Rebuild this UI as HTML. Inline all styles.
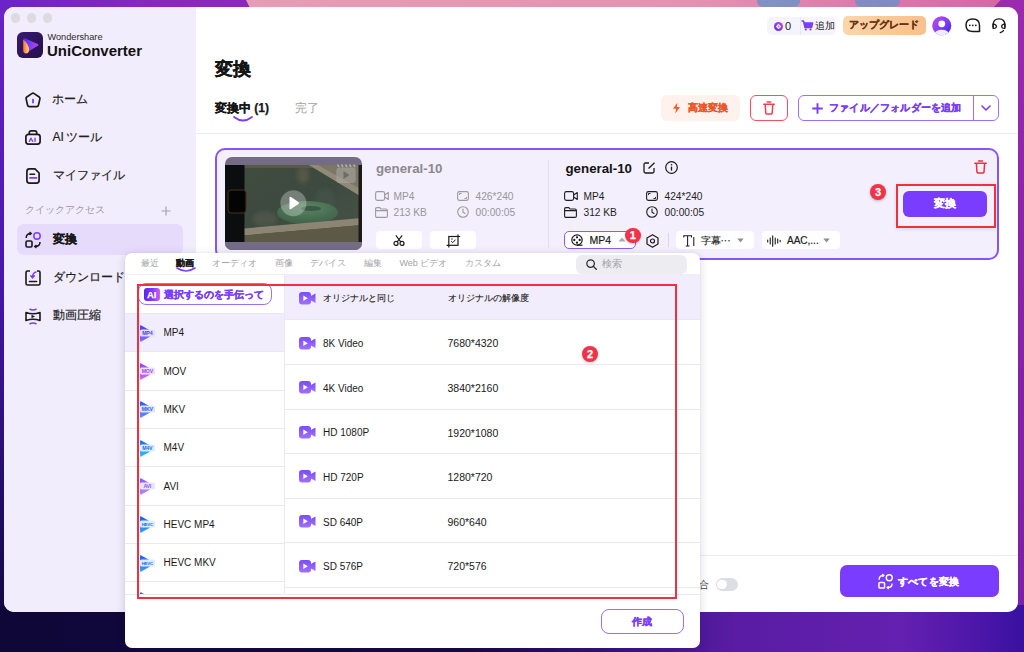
<!DOCTYPE html>
<html lang="ja">
<head>
<meta charset="utf-8">
<style>
*{box-sizing:border-box;margin:0;padding:0}
html,body{width:1024px;height:652px;overflow:hidden}
body{position:relative;font-family:"Liberation Sans",sans-serif;color:#1f1f1f;background:linear-gradient(180deg,#8a2bb5 0%,#5a1aa0 40%,#2a0d6a 80%,#140840 100%)}
.a{position:absolute}
.t{position:absolute;white-space:nowrap;line-height:1}
svg{position:absolute;overflow:visible}
</style>
</head>
<body>
<!-- desktop background -->
<div class="a" style="left:0;top:0;width:1024px;height:652px;background:linear-gradient(90deg,#5a1cb8 0%,#7a22b0 100%)"></div>
<div class="a" style="left:0;top:0;width:8px;height:652px;background:linear-gradient(180deg,#6a22c8 0%,#4a18b0 40%,#1e0c62 80%,#0f0738 100%)"></div>
<div class="a" style="left:1014px;top:0;width:10px;height:652px;background:linear-gradient(180deg,#9a2ab0 0%,#8a24a8 40%,#7a20a8 100%)"></div>
<svg style="left:0;top:0" width="1024" height="20" viewBox="0 0 1024 20"><defs><linearGradient id="tpl" x1="0" y1="0" x2="1" y2="0"><stop offset="0" stop-color="#6a24c8"/><stop offset="0.15" stop-color="#8a26c0"/><stop offset="1" stop-color="#a82ab0"/></linearGradient><linearGradient id="tpk" x1="0" y1="0" x2="1" y2="0"><stop offset="0" stop-color="#e89cb4"/><stop offset="0.6" stop-color="#e690b0"/><stop offset="1" stop-color="#d866a6"/></linearGradient></defs><rect x="0" y="0" width="1024" height="20" fill="url(#tpl)"/><polygon points="246,0 1001,0 988,13 252.5,13" fill="url(#tpk)"/><rect x="1001" y="0" width="23" height="20" fill="#9a2aae"/><polygon points="1001,0 1024,0 1024,20 988,20 988,13" fill="#9a2aae"/></svg>
<div class="a" style="left:0;top:605px;width:1024px;height:47px;background:linear-gradient(90deg,#0f0738 0%,#120840 45%,#3a1488 62%,#5a1ca4 72%,#6420b0 88%,#4a16a8 96%,#3810a0 100%)"></div>
<div class="a" style="left:757px;top:0;width:43px;height:7px;border-radius:0 0 6px 6px;background:#5a94cc;opacity:0.7"></div>
<div class="a" style="left:855px;top:0;width:45px;height:7px;border-radius:0 0 6px 6px;background:#5a94cc;opacity:0.7"></div>

<!-- window -->
<div class="a" style="left:4px;top:7px;width:1014px;height:605px;border-radius:10px;background:#fff;overflow:hidden">
  <div class="a" style="left:0;top:0;width:192px;height:605px;background:#f1edfc"></div>
</div>

<!-- traffic lights -->
<div class="a" style="left:10.5px;top:13px;width:9.5px;height:9.5px;border-radius:50%;background:#dcdbe2"></div>
<div class="a" style="left:26.5px;top:13px;width:9.5px;height:9.5px;border-radius:50%;background:#dcdbe2"></div>
<div class="a" style="left:42.5px;top:13px;width:9.5px;height:9.5px;border-radius:50%;background:#dcdbe2"></div>

<!-- logo -->
<div class="a" style="left:17px;top:32px;width:25.5px;height:26px;border-radius:6px;background:linear-gradient(135deg,#3a1a70,#22104a)"></div>
<svg style="left:17px;top:32px" width="26" height="26" viewBox="0 0 26 26">
  <defs>
    <linearGradient id="lg1" x1="0" y1="0" x2="1" y2="0.4"><stop offset="0" stop-color="#3c34ff"/><stop offset="1" stop-color="#b840f0"/></linearGradient>
    <linearGradient id="lg2" x1="0" y1="0" x2="1" y2="0"><stop offset="0" stop-color="#ff7030"/><stop offset="1" stop-color="#ffe070"/></linearGradient>
  </defs>
  <path d="M6.5 7.5 Q6.5 5.6 8.4 6.4 L20.8 12 Q22.2 12.9 20.8 13.8 L11 19.8 Z" fill="url(#lg1)"/>
  <path d="M6.2 7.4 Q11.8 12 12 17.5 Q12 21.4 9 21.4 Q6.2 21.4 6.2 18 Z" fill="url(#lg2)"/>
</svg>
<div class="t" style="left:47.5px;top:33px;font-size:9.2px;color:#2a2a2a">Wondershare</div>
<div class="t" style="left:47px;top:42.5px;font-size:15px;font-weight:bold;color:#111">UniConverter</div>

<!-- sidebar nav -->
<svg style="left:25px;top:91.5px" width="16" height="16" viewBox="0 0 16 16"><path d="M6.8 1.6 Q8 0.8 9.2 1.6 L14.2 5 Q15.2 5.7 14.9 6.9 L13.4 13.2 Q13.1 14.6 11.7 14.6 H4.3 Q2.9 14.6 2.6 13.2 L1.1 6.9 Q0.8 5.7 1.8 5 Z" fill="none" stroke="#1a1a1a" stroke-width="1.7" stroke-linejoin="round"/><path d="M8 7.6 V10.6" stroke="#7a3cff" stroke-width="1.8" stroke-linecap="round"/></svg>
<div class="t" style="left:52px;top:92.5px;font-size:12px;color:#1f1f1f;-webkit-text-stroke:0.2px #1f1f1f">ホーム</div>

<svg style="left:25px;top:130px" width="16" height="15" viewBox="0 0 16 15"><rect x="0.9" y="4.3" width="14.2" height="9.8" rx="2.5" fill="none" stroke="#1a1a1a" stroke-width="1.7"/><path d="M4.3 4.3 V2.8 Q4.3 0.9 6.2 0.9 H9.8 Q11.7 0.9 11.7 2.8 V4.3" fill="none" stroke="#1a1a1a" stroke-width="1.7"/><path d="M4.4 11.3 L6 8.2 L7.6 11.3 M10 8.2 V11.3" fill="none" stroke="#7a3cff" stroke-width="1.4" stroke-linecap="round" stroke-linejoin="round"/></svg>
<div class="t" style="left:52.5px;top:130.5px;font-size:12px;color:#1f1f1f;-webkit-text-stroke:0.2px #1f1f1f">AI<span style="margin-left:2px">ツール</span></div>

<svg style="left:26px;top:168px" width="14" height="16" viewBox="0 0 14 16"><path d="M0.9 3.5 Q0.9 0.9 3.5 0.9 H9 L13.1 5 V12.5 Q13.1 15.1 10.5 15.1 H3.5 Q0.9 15.1 0.9 12.5 Z" fill="none" stroke="#1a1a1a" stroke-width="1.7" stroke-linejoin="round"/><path d="M4 6.2 H8.5" stroke="#1a1a1a" stroke-width="1.6" stroke-linecap="round"/><path d="M4 9.9 H10.5" stroke="#7a3cff" stroke-width="1.7" stroke-linecap="round"/></svg>
<div class="t" style="left:52.5px;top:168.5px;font-size:12px;color:#1f1f1f;-webkit-text-stroke:0.2px #1f1f1f">マイファイル</div>

<div class="t" style="left:25px;top:204.6px;font-size:10px;color:#9c99a4">クイックアクセス</div>
<svg style="left:161px;top:205.5px" width="10" height="10" viewBox="0 0 10 10"><path d="M5 0.5 V9.5 M0.5 5 H9.5" stroke="#a6a3ae" stroke-width="1.2"/></svg>

<div class="a" style="left:17px;top:224px;width:166px;height:31px;border-radius:7px;background:#e6dbfb"></div>
<svg style="left:25px;top:232px" width="16" height="16" viewBox="0 0 16 16"><circle cx="12" cy="4" r="3.2" fill="none" stroke="#7a3cff" stroke-width="1.5"/><rect x="1" y="9" width="6" height="6" rx="1.2" fill="none" stroke="#1a1a1a" stroke-width="1.6"/><path d="M1.2 6 Q1.2 1.5 6 1.5 M4.5 0 L6.2 1.5 L4.5 3" fill="none" stroke="#1a1a1a" stroke-width="1.5"/><path d="M15 10 Q15 14.5 10 14.5 M11.5 13 L9.8 14.5 L11.5 16" fill="none" stroke="#1a1a1a" stroke-width="1.5"/></svg>
<div class="t" style="left:52.5px;top:232.5px;font-size:12px;font-weight:bold;color:#1a1a1a;-webkit-text-stroke-width:0.25px">変換</div>

<svg style="left:25px;top:270px" width="16" height="16" viewBox="0 0 16 16"><path d="M5 1 H2.5 Q1 1 1 2.5 V13.5 Q1 15 2.5 15 H13.5 Q15 15 15 13.5 V2.5 Q15 1 13.5 1 H12" fill="none" stroke="#1a1a1a" stroke-width="1.6"/><path d="M4.5 11.5 H11.5" stroke="#1a1a1a" stroke-width="1.6" stroke-linecap="round"/><path d="M11 2 Q7.5 3 7.5 7.5 M5.8 5.8 L7.5 7.8 L9.3 5.8" fill="none" stroke="#7a3cff" stroke-width="1.5" stroke-linecap="round"/></svg>
<div class="t" style="left:52.5px;top:271px;font-size:12px;color:#1f1f1f;-webkit-text-stroke:0.2px #1f1f1f">ダウンロード</div>

<svg style="left:25px;top:307.5px" width="16" height="17" viewBox="0 0 16 17"><path d="M1 4.5 Q8 7 15 4.5 V12.5 Q8 10 1 12.5 Z" fill="none" stroke="#1a1a1a" stroke-width="1.6" stroke-linejoin="round"/><path d="M6.5 6.8 L10 8.5 L6.5 10.2 Z" fill="#1a1a1a"/><path d="M4.5 1 Q8 3 11.5 1 M4.5 16 Q8 14 11.5 16" fill="none" stroke="#7a3cff" stroke-width="1.5"/></svg>
<div class="t" style="left:52.5px;top:309px;font-size:12px;color:#1f1f1f;-webkit-text-stroke:0.2px #1f1f1f">動画圧縮</div>


<!-- main header -->
<div class="t" style="left:215px;top:60px;font-size:18px;font-weight:bold;color:#151515;-webkit-text-stroke-width:0.35px">変換</div>
<div class="t" style="left:215px;top:102px;font-size:12px;font-weight:bold;color:#151515;-webkit-text-stroke-width:0.25px">変換中 (1)</div>
<svg style="left:232.5px;top:115.5px" width="20" height="6" viewBox="0 0 20 6"><path d="M1 1 Q10 8 19 1" fill="none" stroke="#7a3cff" stroke-width="1.8" stroke-linecap="round"/></svg>
<div class="t" style="left:295px;top:102px;font-size:12px;color:#a3a3a3">完了</div>
<div class="a" style="left:196px;top:133px;width:822px;height:1px;background:#ececf0"></div>

<!-- top right toolbar -->
<div class="a" style="left:767px;top:16.5px;width:69px;height:18px;border-radius:5px;background:#f6f4fb"></div>
<div class="a" style="left:800px;top:16.5px;width:1px;height:18px;background:#e8e6ee"></div>
<svg style="left:773.5px;top:21.5px" width="9" height="9" viewBox="0 0 9 9"><defs><linearGradient id="coin" x1="0" y1="1" x2="1" y2="0"><stop offset="0" stop-color="#4a2cff"/><stop offset="1" stop-color="#d040f0"/></linearGradient></defs><circle cx="4.5" cy="4.5" r="4.5" fill="url(#coin)"/><path d="M4.5 1.8 L7.2 4.5 L4.5 7.2 L1.8 4.5 Z" fill="#fff"/><path d="M4.5 3.2 L5.8 4.5 L4.5 5.8 L3.2 4.5 Z" fill="#b080ff"/></svg>
<div class="t" style="left:785px;top:21px;font-size:11px;color:#222">0</div>
<svg style="left:801px;top:20px" width="12" height="11" viewBox="0 0 12 11"><path d="M0.5 1 H2.5 L4 7.5 H10.5 L11.5 3 H3" fill="none" stroke="#7a3cff" stroke-width="1.6" stroke-linejoin="round"/><path d="M3.2 3 H11.3 L10.3 7 H4.1 Z" fill="#7a3cff"/><circle cx="4.8" cy="9.5" r="1.1" fill="#7a3cff"/><circle cx="9.5" cy="9.5" r="1.1" fill="#7a3cff"/></svg>
<div class="t" style="left:815px;top:21.2px;font-size:10px;color:#222">追加</div>

<div class="a" style="left:843px;top:16px;width:82.5px;height:19px;border-radius:5px;background:linear-gradient(90deg,#fcd6ad,#fbc795 60%,#f9c08e)"></div>
<div class="t" style="left:849px;top:20px;font-size:10.2px;font-weight:bold;color:#6a3612;-webkit-text-stroke-width:0.25px">アップグレード</div>

<svg style="left:932px;top:16px" width="19.5" height="19.5" viewBox="0 0 20 20"><defs><linearGradient id="av" x1="0.1" y1="0.1" x2="0.9" y2="0.8"><stop offset="0" stop-color="#b848f0"/><stop offset="0.5" stop-color="#8a40f8"/><stop offset="1" stop-color="#4a2cff"/></linearGradient><clipPath id="avc"><circle cx="10" cy="10" r="9.8"/></clipPath></defs><circle cx="10" cy="10" r="9.8" fill="url(#av)"/><g clip-path="url(#avc)"><circle cx="10" cy="8" r="3.5" fill="#fff"/><ellipse cx="10" cy="19" rx="7.5" ry="5" fill="#f0ecfc"/></g></svg>

<svg style="left:965.3px;top:17.8px" width="16" height="15" viewBox="0 0 16 15"><path d="M14.5 13.5 H8 Q1 13.5 1 7.2 Q1 1 7.8 1 Q14.5 1 14.5 7.5 Z" fill="none" stroke="#1a1a1a" stroke-width="1.5" stroke-linejoin="round"/><circle cx="4.8" cy="7.3" r="0.9" fill="#1a1a1a"/><circle cx="7.8" cy="7.3" r="0.9" fill="#1a1a1a"/><circle cx="10.8" cy="7.3" r="0.9" fill="#1a1a1a"/></svg>
<svg style="left:992px;top:18px" width="14" height="16" viewBox="0 0 14 16"><path d="M1.1 9.5 V7 Q1.1 0.9 7 0.9 Q12.9 0.9 12.9 7 V9.5" fill="none" stroke="#1a1a1a" stroke-width="1.4"/><path d="M1.1 5.9 Q4.4 6.6 4.4 8.3 Q4.4 10.6 1.1 10.3 Z" fill="none" stroke="#1a1a1a" stroke-width="1.3" stroke-linejoin="round"/><path d="M12.9 5.9 Q9.6 6.6 9.6 8.3 Q9.6 10.6 12.9 10.3 Z" fill="none" stroke="#1a1a1a" stroke-width="1.3" stroke-linejoin="round"/><path d="M8.3 14.6 Q10.5 14 11.5 12.6" fill="none" stroke="#1a1a1a" stroke-width="1.4" stroke-linecap="round"/></svg>

<!-- buttons row -->
<div class="a" style="left:660.5px;top:95px;width:79px;height:25.5px;border-radius:6px;background:#fff1ec"></div>
<svg style="left:671.5px;top:101.5px" width="9" height="12" viewBox="0 0 9 12"><path d="M5.5 0.5 L1 6.8 H4.2 L3.2 11.5 L8 5 H4.8 Z" fill="#f25a2a"/></svg>
<div class="t" style="left:688px;top:103px;font-size:10px;font-weight:bold;color:#f05526;-webkit-text-stroke-width:0.25px">高速変換</div>

<div class="a" style="left:750px;top:95px;width:38px;height:25.5px;border-radius:6px;border:1px solid #f2505e;background:#fff"></div>
<svg style="left:763px;top:100.5px" width="12" height="14" viewBox="0 0 12 14"><path d="M0.8 3.2 H11.2 M4.2 1 H7.8" stroke="#f0404e" stroke-width="1.5" stroke-linecap="round"/><path d="M2.2 3.5 L2.8 12.2 Q2.9 13 3.7 13 H8.3 Q9.1 13 9.2 12.2 L9.8 3.5" fill="none" stroke="#f0404e" stroke-width="1.5" stroke-linejoin="round"/></svg>

<div class="a" style="left:797.5px;top:95px;width:201px;height:25.5px;border-radius:6px;border:1px solid #9a70ff;background:#fff"></div>
<div class="a" style="left:972.5px;top:95px;width:1px;height:25.5px;background:#9a70ff"></div>
<svg style="left:811.5px;top:102.5px" width="11" height="11" viewBox="0 0 11 11"><path d="M5.5 0.3 V10.7 M0.3 5.5 H10.7" stroke="#7a3cff" stroke-width="1.9"/></svg>
<div class="t" style="left:829px;top:103px;font-size:10px;font-weight:bold;color:#7a3cff;letter-spacing:0.2px;-webkit-text-stroke-width:0.25px">ファイル／フォルダーを追加</div>
<svg style="left:981px;top:105px" width="10" height="6" viewBox="0 0 10 6"><path d="M1 1 L5 5 L9 1" fill="none" stroke="#7a3cff" stroke-width="1.6" stroke-linecap="round" stroke-linejoin="round"/></svg>


<!-- file card -->
<div class="a" style="left:215px;top:148px;width:784px;height:111.5px;border-radius:10px;border:2px solid #8455ff;background:#f3effc"></div>
<!-- thumbnail -->
<svg style="left:225px;top:157px" width="137" height="93" viewBox="0 0 137 93">
<defs>
<clipPath id="thc"><rect x="0" y="0" width="137" height="93" rx="7"/></clipPath>
<linearGradient id="wat" x1="0" y1="0" x2="1" y2="1"><stop offset="0" stop-color="#424c40"/><stop offset="0.5" stop-color="#3d4a40"/><stop offset="1" stop-color="#4a5448"/></linearGradient>
<radialGradient id="tube" cx="0.5" cy="0.3" r="0.65"><stop offset="0" stop-color="#5a8462"/><stop offset="1" stop-color="#40644a"/></radialGradient>
<filter id="bl"><feGaussianBlur stdDeviation="2"/></filter>
</defs>
<g clip-path="url(#thc)">
<rect x="0" y="0" width="137" height="93" fill="#736c84"/>
<rect x="0" y="8" width="137" height="77" fill="url(#wat)"/>
<g filter="url(#bl)" opacity="0.55">
<ellipse cx="78" cy="18" rx="6" ry="9" fill="#6a6450"/>
<ellipse cx="40" cy="62" rx="12" ry="8" fill="#5a5e50"/>
<ellipse cx="100" cy="45" rx="10" ry="14" fill="#48564c"/>
</g>
<rect x="19" y="8" width="118" height="3" fill="#5a5848"/>
<polygon points="84,8 137,8 137,40" fill="#7c7666"/>
<polygon points="84,8 93,8 137,33 137,40" fill="#928a78"/>
<ellipse cx="82.5" cy="55.5" rx="30.5" ry="11.5" fill="url(#tube)"/>
<ellipse cx="86" cy="51.5" rx="10" ry="2.5" fill="#34503e" opacity="0.8"/>
<polygon points="19,71.5 137,61 137,68 19,78.5" fill="#8d8574"/>
<polygon points="19,78.5 137,68 137,85 19,85" fill="#5c5a46"/>
<rect x="0" y="8" width="19.5" height="77" fill="#0a0e0e"/>
<rect x="133.5" y="8" width="3.5" height="77" fill="#1a1a16"/>
<rect x="3" y="33" width="18" height="23" rx="3" fill="#040404" stroke="#4a3018" stroke-width="1"/>
<rect x="0" y="85" width="137" height="8" fill="#736c84"/>
</g>
<circle cx="68.4" cy="46.3" r="13" fill="rgba(235,240,235,0.32)"/>
<path d="M64.5 41 Q64.5 39.3 66 40.1 L73.5 44.9 Q74.8 46 73.5 47.1 L66 51.9 Q64.5 52.8 64.5 51 Z" fill="#fff"/>
<rect x="111.3" y="10.5" width="19.3" height="15.5" rx="3" fill="rgba(170,170,165,0.55)"/>
<path d="M112.5 7.5 L114 10 M116.5 7.5 L118 10 M120.5 7.5 L122 10 M124.5 7.5 L126 10 M128.5 7.5 L130 10" stroke="rgba(200,200,195,0.7)" stroke-width="1.5"/>
<path d="M118.5 14 L124.5 18 L118.5 22 Z" fill="rgba(100,95,90,0.75)"/>
</svg>
<div class="t" style="left:376px;top:161.5px;font-size:13.3px;font-weight:bold;color:#8a8a8e">general-10</div>
<svg style="left:374.5px;top:191px" width="14" height="10" viewBox="0 0 14 10"><rect x="0.6" y="0.6" width="9" height="8.8" rx="1.8" fill="none" stroke="#9a9aa0" stroke-width="1.1"/><path d="M9.6 4 L13.3 1.5 V8.5 L9.6 6" fill="none" stroke="#9a9aa0" stroke-width="1.1" stroke-linejoin="round"/></svg>
<div class="t" style="left:393.5px;top:192px;font-size:10.2px;color:#96969c">MP4</div>
<svg style="left:374.5px;top:206.5px" width="13" height="11" viewBox="0 0 13 11"><path d="M0.6 2 Q0.6 0.6 2 0.6 H4.8 L6 2 H11 Q12.4 2 12.4 3.4 V9 Q12.4 10.4 11 10.4 H2 Q0.6 10.4 0.6 9 Z M0.6 3.6 H12.4" fill="none" stroke="#9a9aa0" stroke-width="1.1"/></svg>
<div class="t" style="left:393.5px;top:207.8px;font-size:10.2px;color:#96969c">213 KB</div>
<svg style="left:457px;top:190.5px" width="12" height="10" viewBox="0 0 12 10"><rect x="0.6" y="0.6" width="10.8" height="8.8" rx="1.8" fill="none" stroke="#9a9aa0" stroke-width="1.1"/><path d="M2.5 4 V2.5 H4.5 M9.5 6 V7.5 H7.5" fill="none" stroke="#9a9aa0" stroke-width="1"/></svg>
<div class="t" style="left:475.5px;top:192px;font-size:10.2px;color:#96969c">426*240</div>
<svg style="left:456.5px;top:205.5px" width="12" height="12" viewBox="0 0 12 12"><circle cx="6" cy="6" r="5.3" fill="none" stroke="#9a9aa0" stroke-width="1.1"/><path d="M6 3 V6.2 L8 7.5" fill="none" stroke="#9a9aa0" stroke-width="1.1" stroke-linecap="round"/></svg>
<div class="t" style="left:475.5px;top:207.8px;font-size:10.2px;color:#96969c">00:00:05</div>

<div class="a" style="left:375.5px;top:231px;width:46px;height:18px;border-radius:4px;background:#fff"></div>
<svg style="left:392.5px;top:235px" width="12" height="11" viewBox="0 0 12 11"><path d="M2.8 0.3 L8 7.2 M9.2 0.3 L4 7.2" stroke="#1a1a1a" stroke-width="1.1"/><circle cx="3" cy="8.4" r="2" fill="none" stroke="#1a1a1a" stroke-width="1.2"/><circle cx="9" cy="8.4" r="2" fill="none" stroke="#1a1a1a" stroke-width="1.2"/></svg>
<div class="a" style="left:430px;top:231px;width:46px;height:18px;border-radius:4px;background:#fff"></div>
<svg style="left:445.8px;top:234px" width="15" height="14" viewBox="0 0 15 14"><rect x="2.8" y="2.5" width="9.2" height="8.8" fill="none" stroke="#1a1a1a" stroke-width="1.2"/><path d="M12 2.5 H14.2 M12 2.5 V0.4 M2.8 11.3 H0.6 M2.8 11.3 V13.5" fill="none" stroke="#1a1a1a" stroke-width="1.2"/><path d="M5.2 7.2 L6.8 8.6 L9.6 5.6" fill="none" stroke="#1a1a1a" stroke-width="1"/><circle cx="6" cy="5" r="0.7" fill="#1a1a1a"/></svg>

<div class="a" style="left:547.5px;top:160px;width:1px;height:88px;background:#e2def0"></div>

<div class="t" style="left:565.5px;top:161.5px;font-size:13.3px;font-weight:bold;color:#141414">general-10</div>
<svg style="left:642.5px;top:161.5px" width="13" height="12" viewBox="0 0 13 12"><path d="M6 1 H2.5 Q1 1 1 2.5 V9.5 Q1 11 2.5 11 H9.5 Q11 11 11 9.5 V6" fill="none" stroke="#1a1a1a" stroke-width="1.3"/><path d="M5.5 6.5 L11.5 0.7" stroke="#1a1a1a" stroke-width="1.3"/></svg>
<svg style="left:664.5px;top:160.5px" width="13" height="13" viewBox="0 0 13 13"><circle cx="6.5" cy="6.5" r="5.8" fill="none" stroke="#1a1a1a" stroke-width="1.2"/><circle cx="6.5" cy="3.8" r="0.8" fill="#1a1a1a"/><path d="M6.5 5.6 V9.6" stroke="#1a1a1a" stroke-width="1.3"/></svg>

<svg style="left:564px;top:191px" width="14" height="10" viewBox="0 0 14 10"><rect x="0.6" y="0.6" width="9" height="8.8" rx="1.8" fill="none" stroke="#1f1f1f" stroke-width="1.1"/><path d="M9.6 4 L13.3 1.5 V8.5 L9.6 6" fill="none" stroke="#1f1f1f" stroke-width="1.1" stroke-linejoin="round"/></svg>
<div class="t" style="left:583.5px;top:192px;font-size:10.2px;color:#1f1f1f">MP4</div>
<svg style="left:564px;top:206.5px" width="13" height="11" viewBox="0 0 13 11"><path d="M0.6 2 Q0.6 0.6 2 0.6 H4.8 L6 2 H11 Q12.4 2 12.4 3.4 V9 Q12.4 10.4 11 10.4 H2 Q0.6 10.4 0.6 9 Z M0.6 3.6 H12.4" fill="none" stroke="#1f1f1f" stroke-width="1.1"/></svg>
<div class="t" style="left:583.5px;top:207.8px;font-size:10.2px;color:#1f1f1f">312 KB</div>
<svg style="left:646px;top:190.5px" width="12" height="10" viewBox="0 0 12 10"><rect x="0.6" y="0.6" width="10.8" height="8.8" rx="1.8" fill="none" stroke="#1f1f1f" stroke-width="1.1"/><path d="M2.5 4 V2.5 H4.5 M9.5 6 V7.5 H7.5" fill="none" stroke="#1f1f1f" stroke-width="1"/></svg>
<div class="t" style="left:664.5px;top:192px;font-size:10.2px;color:#1f1f1f">424*240</div>
<svg style="left:645.5px;top:205.5px" width="12" height="12" viewBox="0 0 12 12"><circle cx="6" cy="6" r="5.3" fill="none" stroke="#1f1f1f" stroke-width="1.1"/><path d="M6 3 V6.2 L8 7.5" fill="none" stroke="#1f1f1f" stroke-width="1.1" stroke-linecap="round"/></svg>
<div class="t" style="left:664.5px;top:207.8px;font-size:10.2px;color:#1f1f1f">00:00:05</div>

<div class="a" style="left:564px;top:230.5px;width:71.5px;height:18.5px;border-radius:5px;border:1.4px solid #8a5cff;background:#fff"></div>
<svg style="left:570.5px;top:234px" width="12" height="12" viewBox="0 0 12 12"><circle cx="6" cy="6" r="5.2" fill="none" stroke="#1a1a1a" stroke-width="1.2"/><circle cx="6" cy="3.3" r="1.15" fill="#1a1a1a"/><circle cx="6" cy="8.7" r="1.15" fill="#1a1a1a"/><circle cx="3.3" cy="6" r="1.15" fill="#1a1a1a"/><circle cx="8.7" cy="6" r="1.15" fill="#1a1a1a"/><path d="M6 11.2 H11.5" stroke="#1a1a1a" stroke-width="1.2"/></svg>
<div class="t" style="left:589.5px;top:235px;font-size:10.5px;color:#1a1a1a;-webkit-text-stroke-width:0.2px">MP4</div>
<svg style="left:617.5px;top:237px" width="8" height="5" viewBox="0 0 8 5"><path d="M0.5 4.5 L4 0.5 L7.5 4.5 Z" fill="#a8a8ae"/></svg>
<div class="a" style="left:625px;top:227.5px;width:15.5px;height:15.5px;border-radius:50%;background:#f03348;box-shadow:0 1px 2px rgba(0,0,0,0.2)"></div>
<div class="t" style="left:625px;top:230px;width:15.5px;text-align:center;font-size:11px;font-weight:bold;color:#fff;-webkit-text-stroke-width:0.25px">1</div>
<svg style="left:645.5px;top:233.5px" width="13" height="14" viewBox="0 0 13 14"><path d="M6.5 0.8 L12 3.9 V10.1 L6.5 13.2 L1 10.1 V3.9 Z" fill="none" stroke="#1a1a1a" stroke-width="1.2" stroke-linejoin="round"/><circle cx="6.5" cy="7" r="2" fill="none" stroke="#1a1a1a" stroke-width="1.2"/></svg>
<div class="a" style="left:668px;top:233px;width:1px;height:14px;background:#dcd8e8"></div>

<div class="a" style="left:676px;top:231px;width:78px;height:18px;border-radius:4px;background:#fff"></div>
<svg style="left:683px;top:234.5px" width="12" height="12" viewBox="0 0 12 12"><path d="M0.8 2.5 V0.8 H8.5 V2.5 M4.6 0.8 V11 M2.8 11 H6.5 M10.8 2 V11" fill="none" stroke="#1a1a1a" stroke-width="1.05"/></svg>
<div class="t" style="left:700.5px;top:235.8px;font-size:10px;color:#1a1a1a;-webkit-text-stroke-width:0.15px">字幕···</div>
<svg style="left:737px;top:238px" width="7" height="5" viewBox="0 0 7 5"><path d="M0.3 0.5 H6.7 L3.5 4.5 Z" fill="#8e8e94"/></svg>

<div class="a" style="left:761.5px;top:231px;width:78.5px;height:18px;border-radius:4px;background:#fff"></div>
<svg style="left:766.5px;top:234.5px" width="15" height="12" viewBox="0 0 15 12"><path d="M0.7 5 V7 M3.2 3 V9 M5.7 0.7 V11.3 M8.2 3 V9 M10.7 4 V8 M13.2 5.3 V6.7" stroke="#1a1a1a" stroke-width="1.1" stroke-linecap="round"/></svg>
<div class="t" style="left:787px;top:235.5px;font-size:10px;color:#1a1a1a;-webkit-text-stroke-width:0.2px">AAC,...</div>
<svg style="left:823px;top:238px" width="7" height="5" viewBox="0 0 7 5"><path d="M0.3 0.5 H6.7 L3.5 4.5 Z" fill="#8e8e94"/></svg>

<svg style="left:973.5px;top:159.5px" width="13" height="14" viewBox="0 0 13 14"><path d="M0.8 3.2 H12.2 M4.5 1 H8.5" stroke="#f0303e" stroke-width="1.5" stroke-linecap="round"/><path d="M2.4 3.5 L3 12.2 Q3.1 13 3.9 13 H9.1 Q9.9 13 10 12.2 L10.6 3.5" fill="none" stroke="#f0303e" stroke-width="1.5" stroke-linejoin="round"/></svg>

<div class="a" style="left:870px;top:184px;width:16px;height:16px;border-radius:50%;background:#f03348;box-shadow:0 1px 3px rgba(0,0,0,0.25)"></div>
<div class="t" style="left:870px;top:186.5px;width:16px;text-align:center;font-size:11px;font-weight:bold;color:#fff;-webkit-text-stroke-width:0.25px">3</div>
<div class="a" style="left:896px;top:183.5px;width:99.5px;height:44px;border:2px solid #f0303e;box-shadow:0 1px 4px rgba(0,0,0,0.12)"></div>
<div class="a" style="left:903px;top:191px;width:83.5px;height:25.5px;border-radius:6px;background:#7a3cff"></div>
<div class="t" style="left:903px;top:198px;width:83.5px;text-align:center;font-size:11px;font-weight:bold;color:#fff;-webkit-text-stroke-width:0.25px">変換</div>

<!-- bottom bar -->
<div class="a" style="left:196px;top:555px;width:822px;height:1px;background:#ececf0"></div>
<div class="t" style="left:699px;top:579.5px;font-size:10px;color:#444">合</div>
<div class="a" style="left:715.5px;top:578px;width:22.5px;height:12.5px;border-radius:7px;background:#dddde5"></div>
<div class="a" style="left:717px;top:579.5px;width:9.5px;height:9.5px;border-radius:50%;background:#fff"></div>
<div class="a" style="left:839.5px;top:565px;width:159px;height:31.5px;border-radius:7px;background:#7a3cff"></div>
<svg style="left:877.5px;top:573.5px" width="15" height="15" viewBox="0 0 16 16"><circle cx="12" cy="4" r="3.2" fill="none" stroke="#fff" stroke-width="1.5"/><rect x="1" y="9" width="6" height="6" rx="1.2" fill="none" stroke="#fff" stroke-width="1.6"/><path d="M1.2 6 Q1.2 1.5 6 1.5 M4.5 0 L6.2 1.5 L4.5 3" fill="none" stroke="#fff" stroke-width="1.5"/><path d="M15 10 Q15 14.5 10 14.5 M11.5 13 L9.8 14.5 L11.5 16" fill="none" stroke="#fff" stroke-width="1.5"/></svg>
<div class="t" style="left:898px;top:576.5px;font-size:10px;letter-spacing:0.2px;font-weight:bold;color:#fff;-webkit-text-stroke-width:0.25px">すべてを変換</div>


<!-- popup -->
<div class="a" style="left:125px;top:253px;width:574.5px;height:395px;border-radius:7px;background:#fff;box-shadow:0 2px 10px rgba(40,20,80,0.18),0 0 1px rgba(0,0,0,0.15);overflow:hidden">
  <div class="a" style="left:159.5px;top:21px;width:415px;height:45.5px;background:#f1edfc"></div>
  <div class="a" style="left:0;top:60px;width:159.5px;height:38.5px;background:#f1edfc"></div>
  <div class="a" style="left:159px;top:21px;width:1px;height:320px;background:#ebe8f2"></div>
  <div class="a" style="left:0;top:21px;width:574.5px;height:1px;background:#f0eef4"></div>
  <div class="a" style="left:0;top:60.0px;width:159px;height:1px;background:#ebe8f2"></div>
  <div class="a" style="left:0;top:98.3px;width:159px;height:1px;background:#ebe8f2"></div>
  <div class="a" style="left:0;top:136.6px;width:159px;height:1px;background:#ebe8f2"></div>
  <div class="a" style="left:0;top:174.9px;width:159px;height:1px;background:#ebe8f2"></div>
  <div class="a" style="left:0;top:213.2px;width:159px;height:1px;background:#ebe8f2"></div>
  <div class="a" style="left:0;top:251.5px;width:159px;height:1px;background:#ebe8f2"></div>
  <div class="a" style="left:0;top:289.8px;width:159px;height:1px;background:#ebe8f2"></div>
  <div class="a" style="left:0;top:328.1px;width:159px;height:1px;background:#ebe8f2"></div>
  <div class="a" style="left:0;top:341px;width:159px;height:1px;background:#ebe8f2"></div>
  <div class="a" style="left:160px;top:66.3px;width:414.5px;height:1px;background:#ebe8f2"></div>
  <div class="a" style="left:160px;top:110.9px;width:414.5px;height:1px;background:#ebe8f2"></div>
  <div class="a" style="left:160px;top:155.5px;width:414.5px;height:1px;background:#ebe8f2"></div>
  <div class="a" style="left:160px;top:200.1px;width:414.5px;height:1px;background:#ebe8f2"></div>
  <div class="a" style="left:160px;top:244.7px;width:414.5px;height:1px;background:#ebe8f2"></div>
  <div class="a" style="left:160px;top:289.3px;width:414.5px;height:1px;background:#ebe8f2"></div>
  <div class="a" style="left:160px;top:333.9px;width:414.5px;height:1px;background:#ebe8f2"></div>
  <div class="a" style="left:160px;top:341px;width:414.5px;height:1px;background:#ebe8f2"></div>
</div>
<div class="t" style="left:140.5px;top:258.5px;font-size:9px;color:#a3a3a8">最近</div>
<div class="t" style="left:176.3px;top:258.5px;font-size:9px;font-weight:bold;color:#1a1a1a;-webkit-text-stroke-width:0.25px">動画</div>
<div class="t" style="left:212.3px;top:258.5px;font-size:9px;color:#a3a3a8">オーディオ</div>
<div class="t" style="left:274.7px;top:258.5px;font-size:9px;color:#a3a3a8">画像</div>
<div class="t" style="left:310.4px;top:258.5px;font-size:9px;color:#a3a3a8">デバイス</div>
<div class="t" style="left:363.8px;top:258.5px;font-size:9px;color:#a3a3a8">編集</div>
<div class="t" style="left:399.5px;top:258.5px;font-size:9px;color:#a3a3a8">Web<span style="margin-left:2.5px">ビデオ</span></div>
<div class="t" style="left:465.2px;top:258.5px;font-size:9px;color:#a3a3a8">カスタム</div>
<svg style="left:175.5px;top:266.5px" width="20" height="5" viewBox="0 0 20 5"><path d="M1 1 Q10 7 19 1" fill="none" stroke="#7a3cff" stroke-width="1.6" stroke-linecap="round"/></svg>
<div class="a" style="left:575.5px;top:255px;width:111px;height:18.5px;border-radius:6px;background:#ececf1"></div>
<svg style="left:585.5px;top:258.5px" width="11" height="11" viewBox="0 0 11 11"><circle cx="4.6" cy="4.6" r="3.8" fill="none" stroke="#2a2a2a" stroke-width="1.2"/><path d="M7.4 7.4 L10.3 10.3" stroke="#2a2a2a" stroke-width="1.3" stroke-linecap="round"/></svg>
<div class="t" style="left:602px;top:259px;font-size:10px;color:#a0a0a6">検索</div>
<div class="a" style="left:138px;top:282.8px;width:133.8px;height:22.7px;border-radius:8px;border:1px solid #9a70ff;background:#fff"></div>
<div class="a" style="left:144px;top:288.3px;width:15.5px;height:12.5px;border-radius:3px;background:linear-gradient(90deg,#5a24f5,#8a3cff 60%,#d060f0)"></div>
<div class="t" style="left:144px;top:290.2px;width:15.5px;text-align:center;font-size:9.5px;font-weight:bold;color:#fff;-webkit-text-stroke-width:0.25px">AI</div>
<div class="t" style="left:163.5px;top:289.5px;font-size:10px;font-weight:bold;color:#7a3cff;-webkit-text-stroke-width:0.25px">選択するのを手伝って</div>
<svg style="left:139px;top:324.8px" width="17" height="17" viewBox="0 0 17 17"><defs><linearGradient id="fg1" x1="0" y1="0" x2="0" y2="1"><stop offset="0" stop-color="#4a3cff"/><stop offset="1" stop-color="#8a6aff"/></linearGradient></defs><path d="M1 1.2 Q1 -0.2 2.3 0.5 L10.8 5.2 V11.8 L2.3 16.5 Q1 17.2 1 15.8 Z" fill="url(#fg1)"/><rect x="1" y="4.6" width="15" height="6.8" rx="1.5" fill="#e4defc"/><text x="8.3" y="10" font-size="5.2" font-weight="bold" fill="#4a3cff" text-anchor="middle" font-family="Liberation Sans" letter-spacing="-0.2">MP4</text></svg><div class="t" style="left:163.5px;top:328.3px;font-size:10px;color:#1a1a1a">MP4</div>
<svg style="left:139px;top:363.1px" width="17" height="17" viewBox="0 0 17 17"><defs><linearGradient id="fg2" x1="0" y1="0" x2="0" y2="1"><stop offset="0" stop-color="#a040f0"/><stop offset="1" stop-color="#c070f5"/></linearGradient></defs><path d="M1 1.2 Q1 -0.2 2.3 0.5 L10.8 5.2 V11.8 L2.3 16.5 Q1 17.2 1 15.8 Z" fill="url(#fg2)"/><rect x="1" y="4.6" width="15" height="6.8" rx="1.5" fill="#f1e0fd"/><text x="8.3" y="10" font-size="5.2" font-weight="bold" fill="#a040f0" text-anchor="middle" font-family="Liberation Sans" letter-spacing="-0.2">MOV</text></svg><div class="t" style="left:163.5px;top:366.6px;font-size:10px;color:#1a1a1a">MOV</div>
<svg style="left:139px;top:401.4px" width="17" height="17" viewBox="0 0 17 17"><defs><linearGradient id="fg3" x1="0" y1="0" x2="0" y2="1"><stop offset="0" stop-color="#2a5aff"/><stop offset="1" stop-color="#6a8aff"/></linearGradient></defs><path d="M1 1.2 Q1 -0.2 2.3 0.5 L10.8 5.2 V11.8 L2.3 16.5 Q1 17.2 1 15.8 Z" fill="url(#fg3)"/><rect x="1" y="4.6" width="15" height="6.8" rx="1.5" fill="#dde6ff"/><text x="8.3" y="10" font-size="5.2" font-weight="bold" fill="#2a5aff" text-anchor="middle" font-family="Liberation Sans" letter-spacing="-0.2">MKV</text></svg><div class="t" style="left:163.5px;top:404.9px;font-size:10px;color:#1a1a1a">MKV</div>
<svg style="left:139px;top:439.7px" width="17" height="17" viewBox="0 0 17 17"><defs><linearGradient id="fg4" x1="0" y1="0" x2="0" y2="1"><stop offset="0" stop-color="#1a6aff"/><stop offset="1" stop-color="#30c0f5"/></linearGradient></defs><path d="M1 1.2 Q1 -0.2 2.3 0.5 L10.8 5.2 V11.8 L2.3 16.5 Q1 17.2 1 15.8 Z" fill="url(#fg4)"/><rect x="1" y="4.6" width="15" height="6.8" rx="1.5" fill="#d6f0ff"/><text x="8.3" y="10" font-size="5.2" font-weight="bold" fill="#1a6aff" text-anchor="middle" font-family="Liberation Sans" letter-spacing="-0.2">M4V</text></svg><div class="t" style="left:163.5px;top:443.2px;font-size:10px;color:#1a1a1a">M4V</div>
<svg style="left:139px;top:478.0px" width="17" height="17" viewBox="0 0 17 17"><defs><linearGradient id="fg5" x1="0" y1="0" x2="0" y2="1"><stop offset="0" stop-color="#8a5af0"/><stop offset="1" stop-color="#b08af5"/></linearGradient></defs><path d="M1 1.2 Q1 -0.2 2.3 0.5 L10.8 5.2 V11.8 L2.3 16.5 Q1 17.2 1 15.8 Z" fill="url(#fg5)"/><rect x="1" y="4.6" width="15" height="6.8" rx="1.5" fill="#ebe4fd"/><text x="8.3" y="10" font-size="5.2" font-weight="bold" fill="#8a5af0" text-anchor="middle" font-family="Liberation Sans" letter-spacing="-0.2">AVI</text></svg><div class="t" style="left:163.5px;top:481.5px;font-size:10px;color:#1a1a1a">AVI</div>
<svg style="left:139px;top:516.3px" width="17" height="17" viewBox="0 0 17 17"><defs><linearGradient id="fg6" x1="0" y1="0" x2="0" y2="1"><stop offset="0" stop-color="#1a60ff"/><stop offset="1" stop-color="#3aa0f5"/></linearGradient></defs><path d="M1 1.2 Q1 -0.2 2.3 0.5 L10.8 5.2 V11.8 L2.3 16.5 Q1 17.2 1 15.8 Z" fill="url(#fg6)"/><rect x="1" y="4.6" width="15" height="6.8" rx="1.5" fill="#dcecff"/><text x="8.3" y="10" font-size="4.3" font-weight="bold" fill="#1a60ff" text-anchor="middle" font-family="Liberation Sans" letter-spacing="-0.2">HEVC</text></svg><div class="t" style="left:163.5px;top:519.8px;font-size:10px;color:#1a1a1a">HEVC MP4</div>
<svg style="left:139px;top:554.6px" width="17" height="17" viewBox="0 0 17 17"><defs><linearGradient id="fg7" x1="0" y1="0" x2="0" y2="1"><stop offset="0" stop-color="#1a60ff"/><stop offset="1" stop-color="#3aa0f5"/></linearGradient></defs><path d="M1 1.2 Q1 -0.2 2.3 0.5 L10.8 5.2 V11.8 L2.3 16.5 Q1 17.2 1 15.8 Z" fill="url(#fg7)"/><rect x="1" y="4.6" width="15" height="6.8" rx="1.5" fill="#dcecff"/><text x="8.3" y="10" font-size="4.3" font-weight="bold" fill="#1a60ff" text-anchor="middle" font-family="Liberation Sans" letter-spacing="-0.2">HEVC</text></svg><div class="t" style="left:163.5px;top:558.1px;font-size:10px;color:#1a1a1a">HEVC MKV</div>
<div class="a" style="left:139px;top:585px;width:17px;height:9px;overflow:hidden"><svg style="left:0;top:7.1px" width="17" height="17" viewBox="0 0 17 17"><defs><linearGradient id="fg8" x1="0" y1="0" x2="0" y2="1"><stop offset="0" stop-color="#1a60ff"/><stop offset="1" stop-color="#3aa0f5"/></linearGradient></defs><path d="M1 1.2 Q1 -0.2 2.3 0.5 L10.8 5.2 V11.8 L2.3 16.5 Q1 17.2 1 15.8 Z" fill="url(#fg8)"/><rect x="1" y="4.6" width="15" height="6.8" rx="1.5" fill="#dcecff"/><text x="8.3" y="10" font-size="4.3" font-weight="bold" fill="#1a60ff" text-anchor="middle" font-family="Liberation Sans" letter-spacing="-0.2">HEVC</text></svg></div><svg style="left:298.5px;top:292.0px" width="17" height="13" viewBox="0 0 17 13"><defs><linearGradient id="vg0" x1="0" y1="0" x2="0" y2="1"><stop offset="0" stop-color="#7a4cff"/><stop offset="1" stop-color="#a070ff"/></linearGradient></defs><rect x="0" y="0" width="12" height="12.5" rx="3" fill="url(#vg0)"/><path d="M11 4.5 L16.5 1.5 V11 L11 8 Z" fill="url(#vg0)"/><path d="M4.3 3.5 L8.8 6.25 L4.3 9 Z" fill="#fff"/></svg>
<div class="t" style="left:323px;top:293.7px;font-size:9px;color:#1a1a1a;-webkit-text-stroke:0.12px #1a1a1a">オリジナルと同じ</div>
<div class="t" style="left:447.5px;top:293.7px;font-size:9px;color:#1a1a1a;-webkit-text-stroke:0.12px #1a1a1a">オリジナルの解像度</div>
<svg style="left:298.5px;top:336.6px" width="17" height="13" viewBox="0 0 17 13"><defs><linearGradient id="vg1" x1="0" y1="0" x2="0" y2="1"><stop offset="0" stop-color="#7a4cff"/><stop offset="1" stop-color="#a070ff"/></linearGradient></defs><rect x="0" y="0" width="12" height="12.5" rx="3" fill="url(#vg1)"/><path d="M11 4.5 L16.5 1.5 V11 L11 8 Z" fill="url(#vg1)"/><path d="M4.3 3.5 L8.8 6.25 L4.3 9 Z" fill="#fff"/></svg>
<div class="t" style="left:323px;top:339.1px;font-size:10px;color:#1a1a1a">8K Video</div>
<div class="t" style="left:447.5px;top:338.3px;font-size:10.5px;color:#1a1a1a">7680*4320</div>
<svg style="left:298.5px;top:381.2px" width="17" height="13" viewBox="0 0 17 13"><defs><linearGradient id="vg2" x1="0" y1="0" x2="0" y2="1"><stop offset="0" stop-color="#7a4cff"/><stop offset="1" stop-color="#a070ff"/></linearGradient></defs><rect x="0" y="0" width="12" height="12.5" rx="3" fill="url(#vg2)"/><path d="M11 4.5 L16.5 1.5 V11 L11 8 Z" fill="url(#vg2)"/><path d="M4.3 3.5 L8.8 6.25 L4.3 9 Z" fill="#fff"/></svg>
<div class="t" style="left:323px;top:383.7px;font-size:10px;color:#1a1a1a">4K Video</div>
<div class="t" style="left:447.5px;top:382.9px;font-size:10.5px;color:#1a1a1a">3840*2160</div>
<svg style="left:298.5px;top:425.8px" width="17" height="13" viewBox="0 0 17 13"><defs><linearGradient id="vg3" x1="0" y1="0" x2="0" y2="1"><stop offset="0" stop-color="#7a4cff"/><stop offset="1" stop-color="#a070ff"/></linearGradient></defs><rect x="0" y="0" width="12" height="12.5" rx="3" fill="url(#vg3)"/><path d="M11 4.5 L16.5 1.5 V11 L11 8 Z" fill="url(#vg3)"/><path d="M4.3 3.5 L8.8 6.25 L4.3 9 Z" fill="#fff"/></svg>
<div class="t" style="left:323px;top:428.3px;font-size:10px;color:#1a1a1a">HD 1080P</div>
<div class="t" style="left:447.5px;top:427.5px;font-size:10.5px;color:#1a1a1a">1920*1080</div>
<svg style="left:298.5px;top:470.4px" width="17" height="13" viewBox="0 0 17 13"><defs><linearGradient id="vg4" x1="0" y1="0" x2="0" y2="1"><stop offset="0" stop-color="#7a4cff"/><stop offset="1" stop-color="#a070ff"/></linearGradient></defs><rect x="0" y="0" width="12" height="12.5" rx="3" fill="url(#vg4)"/><path d="M11 4.5 L16.5 1.5 V11 L11 8 Z" fill="url(#vg4)"/><path d="M4.3 3.5 L8.8 6.25 L4.3 9 Z" fill="#fff"/></svg>
<div class="t" style="left:323px;top:472.9px;font-size:10px;color:#1a1a1a">HD 720P</div>
<div class="t" style="left:447.5px;top:472.1px;font-size:10.5px;color:#1a1a1a">1280*720</div>
<svg style="left:298.5px;top:515.0px" width="17" height="13" viewBox="0 0 17 13"><defs><linearGradient id="vg5" x1="0" y1="0" x2="0" y2="1"><stop offset="0" stop-color="#7a4cff"/><stop offset="1" stop-color="#a070ff"/></linearGradient></defs><rect x="0" y="0" width="12" height="12.5" rx="3" fill="url(#vg5)"/><path d="M11 4.5 L16.5 1.5 V11 L11 8 Z" fill="url(#vg5)"/><path d="M4.3 3.5 L8.8 6.25 L4.3 9 Z" fill="#fff"/></svg>
<div class="t" style="left:323px;top:517.5px;font-size:10px;color:#1a1a1a">SD 640P</div>
<div class="t" style="left:447.5px;top:516.7px;font-size:10.5px;color:#1a1a1a">960*640</div>
<svg style="left:298.5px;top:559.6px" width="17" height="13" viewBox="0 0 17 13"><defs><linearGradient id="vg6" x1="0" y1="0" x2="0" y2="1"><stop offset="0" stop-color="#7a4cff"/><stop offset="1" stop-color="#a070ff"/></linearGradient></defs><rect x="0" y="0" width="12" height="12.5" rx="3" fill="url(#vg6)"/><path d="M11 4.5 L16.5 1.5 V11 L11 8 Z" fill="url(#vg6)"/><path d="M4.3 3.5 L8.8 6.25 L4.3 9 Z" fill="#fff"/></svg>
<div class="t" style="left:323px;top:562.1px;font-size:10px;color:#1a1a1a">SD 576P</div>
<div class="t" style="left:447.5px;top:561.3px;font-size:10.5px;color:#1a1a1a">720*576</div>
<div class="a" style="left:137px;top:284.2px;width:539.5px;height:315px;border:2.4px solid #f0303e"></div>
<div class="a" style="left:582px;top:346px;width:16px;height:16px;border-radius:50%;background:#f03348;box-shadow:0 1px 3px rgba(0,0,0,0.25)"></div>
<div class="t" style="left:582px;top:348.5px;width:16px;text-align:center;font-size:11px;font-weight:bold;color:#fff;-webkit-text-stroke-width:0.25px">2</div>
<div class="a" style="left:600.5px;top:608.5px;width:83px;height:25px;border-radius:8px;border:1px solid #9a70ff;background:#fff"></div>
<div class="t" style="left:600.5px;top:616.5px;width:83px;text-align:center;font-size:10px;font-weight:bold;color:#7a3cff;-webkit-text-stroke-width:0.25px">作成</div>

</body>
</html>
